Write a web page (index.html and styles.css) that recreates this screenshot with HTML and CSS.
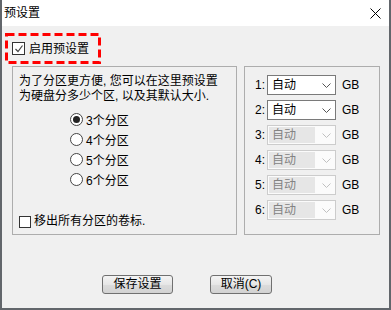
FILE: index.html
```html
<!DOCTYPE html>
<html lang="zh-CN">
<head>
    <meta charset="UTF-8">
    <meta name="viewport" content="width=device-width, initial-scale=1.0">
    <title>预设置</title>
    <link rel="stylesheet" href="styles.css">
</head>
<body>
    <div class="window">
        <div class="titlebar">
            <span class="title">预设置</span>
            <svg class="close" width="11" height="11" viewBox="0 0 11 11">
                <path d="M0.5 0.5 L10.5 10.5 M10.5 0.5 L0.5 10.5" stroke="#000" stroke-width="1"/>
            </svg>
        </div>

        <div class="content">
            <div class="enable-row">
                <span class="checkbox">
                    <svg width="10" height="10" viewBox="0 0 10 10">
                        <path d="M1.5 5 L4 7.5 L8.5 1.5" fill="none" stroke="#444" stroke-width="1.2"/>
                    </svg>
                </span>
                <span>启用预设置</span>
                <!-- 红色虚线标注框 -->
                <svg class="mark" width="96" height="31" viewBox="0 0 96 31">
                    <rect x="1.5" y="1.5" width="93" height="28" fill="none" stroke="#ff0000" stroke-width="3" stroke-dasharray="8 4"/>
                </svg>
            </div>

            <div class="groups">
                <div class="group group-left">
                    <p class="intro">为了分区更方便, 您可以在这里预设置<br>为硬盘分多少个区, 以及其默认大小.</p>
                    <ul class="radios">
                        <li><span class="radio selected"></span>3个分区</li>
                        <li><span class="radio"></span>4个分区</li>
                        <li><span class="radio"></span>5个分区</li>
                        <li><span class="radio"></span>6个分区</li>
                    </ul>
                    <div class="remove-row">
                        <span class="checkbox"></span>
                        <span>移出所有分区的卷标.</span>
                    </div>
                </div>

                <div class="group group-right" id="sizes"></div>
            </div>

            <div class="buttons">
                <button class="btn btn-save">保存设置</button>
                <button class="btn btn-cancel">取消(C)</button>
            </div>
        </div>
    </div>

    <script>
        // 分区大小下拉框
        const sizes = document.getElementById("sizes");
        const chevron = '<svg width="9" height="5" viewBox="0 0 9 5"><path d="M0.5 0.5 L4.5 4.5 L8.5 0.5" fill="none" stroke="currentColor" stroke-width="1"/></svg>';

        for (let i = 1; i <= 6; i++) {
            const row = document.createElement("div");
            row.className = "size-row";
            const disabled = i > 2 ? " disabled" : "";
            row.innerHTML =
                '<span class="num">' + i + ':</span>' +
                '<span class="combo' + disabled + '"><span class="combo-text">自动</span>' + chevron + '</span>' +
                '<span class="unit">GB</span>';
            sizes.appendChild(row);
        }
    </script>
</body>
</html>
```

FILE: styles.css
```css
body {
    margin: 0;
    padding: 0;
    font-family: "Liberation Sans", "Noto Sans CJK SC", sans-serif;
    font-size: 12px;
    color: #000;
    background-color: #ffffff;
}
.window {
    width: 391px;
    height: 310px;
    box-sizing: border-box;
    border-left: 2px solid #62666b;
    border-right: 2px solid #62666b;
    border-bottom: 2px solid #62666b;
    background-color: #f0f0f0;
    display: flex;
    flex-direction: column;
}
.titlebar {
    height: 26px;
    flex-shrink: 0;
    background-color: #ffffff;
    display: flex;
    align-items: center;
    justify-content: space-between;
    padding: 0 8px 0 2px;
}
.title {
    font-size: 12px;
    line-height: 16px;
}
.close {
    display: block;
}
.content {
    flex: 1;
    display: flex;
    flex-direction: column;
}

/* 启用预设置 */
.enable-row {
    position: relative;
    margin: 7px 0 0 3px;
    width: 96px;
    height: 31px;
    display: flex;
    align-items: center;
    padding-left: 7px;
    box-sizing: border-box;
    gap: 4px;
}
.mark {
    position: absolute;
    left: 0;
    top: 0;
}
.checkbox {
    width: 12px;
    height: 12px;
    box-sizing: border-box;
    border: 1px solid #333;
    background-color: #ffffff;
    display: flex;
    align-items: center;
    justify-content: center;
    flex-shrink: 0;
}
.enable-row .checkbox {
    width: 13px;
    height: 13px;
}
.enable-row span:not(.checkbox) {
    font-size: 12px;
    line-height: 16px;
}

/* 分组框 */
.groups {
    display: flex;
    gap: 7px;
    margin-top: 2px;
    padding-left: 10px;
}
.group {
    height: 169px;
    box-sizing: border-box;
    border: 1px solid #adadad;
}
.group-left {
    width: 225px;
    padding: 7px 6px 0 6px;
    display: flex;
    flex-direction: column;
}
.intro {
    margin: 0;
    line-height: 15px;
}
.radios {
    list-style-type: none;
    margin: 5px 0 0 0;
    padding: 0 0 0 51px;
}
.radios li {
    height: 20px;
    display: flex;
    align-items: center;
    gap: 3px;
}
.radio {
    width: 13px;
    height: 13px;
    box-sizing: border-box;
    border: 1px solid #444;
    border-radius: 50%;
    background-color: #ffffff;
    display: flex;
    align-items: center;
    justify-content: center;
}
.radio.selected::after {
    content: "";
    width: 7px;
    height: 7px;
    border-radius: 50%;
    background-color: #222;
}
.remove-row {
    margin-top: auto;
    margin-bottom: 5px;
    display: flex;
    align-items: center;
    gap: 3px;
    line-height: 15px;
}

/* 分区大小 */
.group-right {
    width: 136px;
    padding: 8px 0 0 10px;
}
.size-row {
    height: 20px;
    margin-bottom: 5px;
    display: flex;
    align-items: center;
}
.num {
    width: 12px;
}
.combo {
    width: 69px;
    height: 20px;
    box-sizing: border-box;
    border: 1px solid #7a7a7a;
    background-color: #ffffff;
    display: flex;
    align-items: center;
    justify-content: space-between;
    padding: 0 4px 0 1px;
    color: #555;
}
.combo-text {
    width: 46px;
    box-sizing: border-box;
    color: #000;
    font-size: 12px;
    line-height: 16px;
    padding: 0 3px;
}
.combo.disabled {
    border-color: #cccccc;
    background-color: #fbfbfb;
    color: #c0c0c0;
}
.combo.disabled .combo-text {
    color: #838383;
    background-color: #e6e6e6;
}
.unit {
    margin-left: 6px;
}

/* 按钮 */
.buttons {
    display: flex;
    gap: 37px;
    margin-top: 40px;
    padding-left: 100px;
}
.btn {
    height: 19px;
    padding: 0;
    font-family: "Liberation Sans", "Noto Sans CJK SC", sans-serif;
    font-size: 12px;
    line-height: 15px;
    color: #000;
    border: 1px solid #707070;
    border-radius: 3px;
    background: linear-gradient(#f4f4f4, #e6e6e6 50%, #dcdcdc 51%, #d2d2d2);
}
.btn-save {
    width: 71px;
}
.btn-cancel {
    width: 62px;
}
```
